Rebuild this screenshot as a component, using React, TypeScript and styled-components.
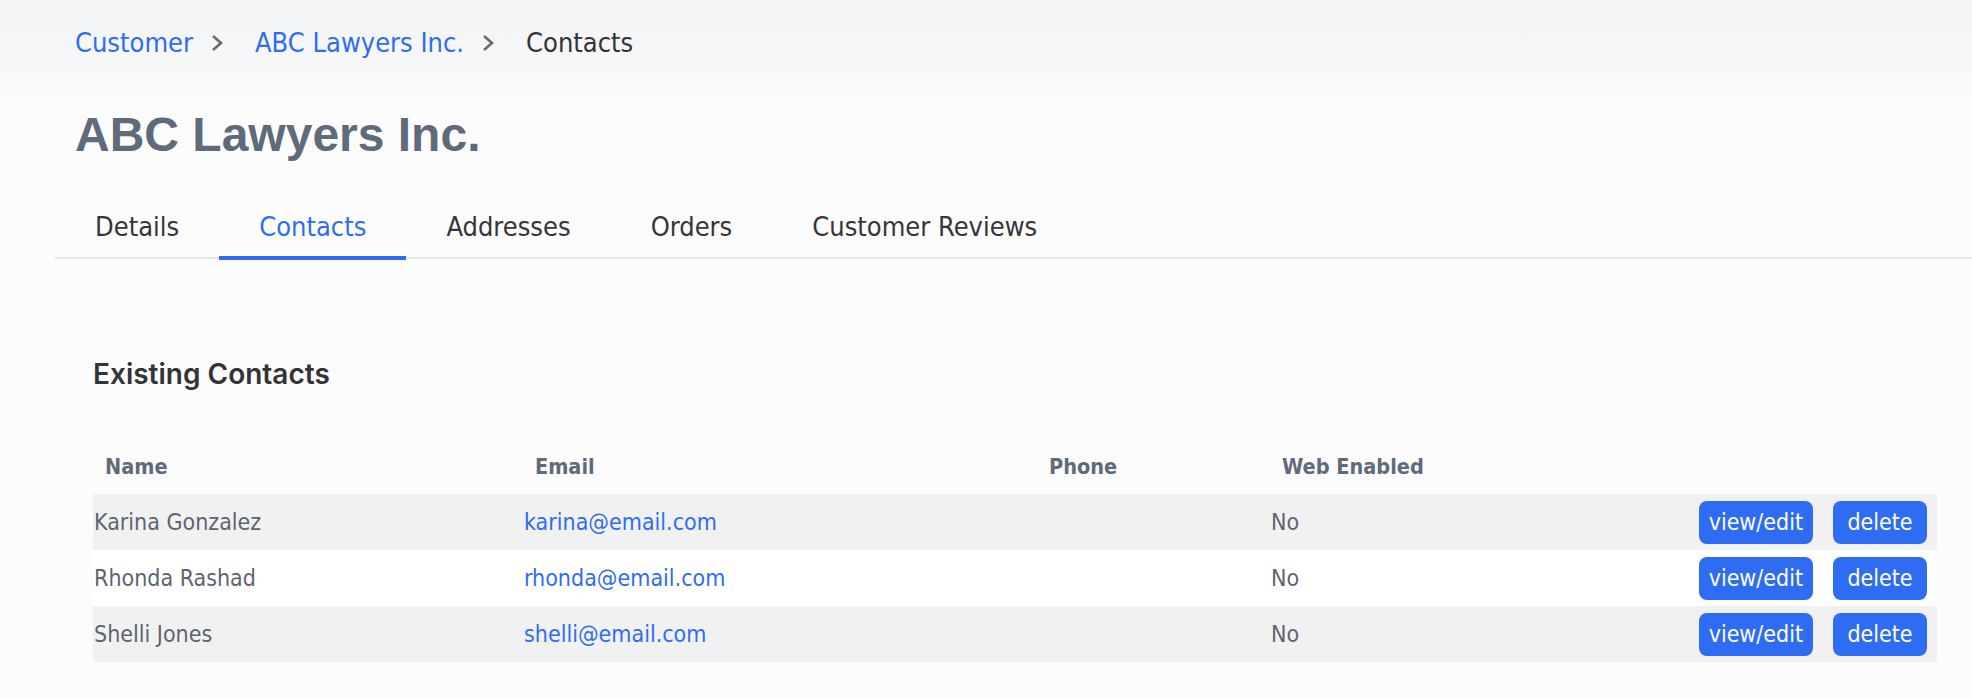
import React from 'react';
import styled, { createGlobalStyle } from 'styled-components';

const BLUE = '#2f6cf4';

const GlobalStyle = createGlobalStyle`
    html, body {
        margin: 0;
        padding: 0;
    }

    body {
        min-height: 698px;
        background: linear-gradient(#f2f3f5 0, #fcfcfc 120px) no-repeat, #fcfcfc;
        font-family: "DejaVu Sans Condensed", "DejaVu Sans", sans-serif;
        font-stretch: condensed;
        color: #333;
    }
`;

const Page = styled.div`
    padding-top: 27px;
`;

const Header = styled.header`
    padding-left: 75px;
`;

const Breadcrumbs = styled.nav`
    display: flex;
    align-items: center;
    height: 32px;
    font-size: 27px;
    line-height: 32px;
`;

const Crumb = styled.a<{ $current?: boolean }>`
    color: ${(p) => (p.$current ? '#333' : BLUE)};
    text-decoration: none;
    cursor: ${(p) => (p.$current ? 'default' : 'pointer')};
`;

const Separator = styled.span`
    display: inline-flex;
    margin: 0 32px 0 18px;
`;

const Title = styled.h1`
    margin: 48px 0 0;
    font-family: "Liberation Sans", Arial, sans-serif;
    font-stretch: normal;
    font-size: 48px;
    line-height: 56px;
    font-weight: 700;
    color: #5f6b7a;
`;

const TabBar = styled.div`
    display: flex;
    margin: 48px 0 0 55px;
    border-bottom: 2px solid #e6e6e6;
`;

const Tab = styled.a<{ $active?: boolean }>`
    padding: 0 40px 13px;
    margin-bottom: -3px;
    font-size: 27px;
    line-height: 32px;
    color: ${(p) => (p.$active ? BLUE : '#36353a')};
    border-bottom: 4px solid ${(p) => (p.$active ? BLUE : 'transparent')};
    cursor: pointer;
`;

const Content = styled.section`
    padding: 0 35px 0 93px;
`;

const SectionTitle = styled.h2`
    margin: 99px 0 0;
    font-family: Inter, "Liberation Sans", sans-serif;
    font-stretch: normal;
    font-size: 28px;
    line-height: 32px;
    font-weight: 600;
    color: #333338;
`;

const Table = styled.div`
    margin-top: 48px;
    display: grid;
    grid-template-columns: 430px 514px 233px 1fr auto;
`;

const HeadCell = styled.div`
    display: flex;
    align-items: center;
    height: 56px;
    padding-left: 12px;
    font-size: 21.5px;
    font-weight: 700;
    color: #5f6b7a;
`;

const Cell = styled.div<{ $striped?: boolean }>`
    display: flex;
    align-items: center;
    height: 56px;
    padding-left: 1px;
    font-size: 23px;
    color: #5d6472;
    background: ${(p) => (p.$striped ? '#f1f1f1' : '#ffffff')};
`;

const EmailLink = styled.a`
    color: ${BLUE};
    text-decoration: none;
`;

const Actions = styled(Cell)`
    gap: 20px;
    padding: 0 10px 0 0;
    justify-content: flex-end;
`;

const Button = styled.button`
    height: 43px;
    min-width: 94px;
    padding: 0 10px;
    border: none;
    border-radius: 8px;
    background: ${BLUE};
    color: #fff;
    font-family: inherit;
    font-stretch: condensed;
    font-size: 23px;
    cursor: pointer;
`;

function Chevron() {
    return (
        <svg width="12" height="18" viewBox="0 0 12 18">
            <polyline points="2,2 10,9 2,16" fill="none" stroke="#6a6a6a" strokeWidth="2.6" />
        </svg>
    );
}

const contacts = [
    { name: 'Karina Gonzalez', email: 'karina@email.com', phone: '', web: 'No' },
    { name: 'Rhonda Rashad', email: 'rhonda@email.com', phone: '', web: 'No' },
    { name: 'Shelli Jones', email: 'shelli@email.com', phone: '', web: 'No' },
];

const tabs = ['Details', 'Contacts', 'Addresses', 'Orders', 'Customer Reviews'];

export default function App() {
    return (
        <Page>
            <GlobalStyle />
            <Header>
                <Breadcrumbs>
                    <Crumb>Customer</Crumb>
                    <Separator>
                        <Chevron />
                    </Separator>
                    <Crumb>ABC Lawyers Inc.</Crumb>
                    <Separator>
                        <Chevron />
                    </Separator>
                    <Crumb $current>Contacts</Crumb>
                </Breadcrumbs>
                <Title>ABC Lawyers Inc.</Title>
            </Header>

            <TabBar>
                {tabs.map((t) => (
                    <Tab key={t} $active={t === 'Contacts'}>
                        {t}
                    </Tab>
                ))}
            </TabBar>

            <Content>
                <SectionTitle>Existing Contacts</SectionTitle>
                <Table>
                    <HeadCell>Name</HeadCell>
                    <HeadCell>Email</HeadCell>
                    <HeadCell>Phone</HeadCell>
                    <HeadCell>Web Enabled</HeadCell>
                    <HeadCell />
                    {contacts.map((c, i) => {
                        const striped = i % 2 === 0;
                        return (
                            <React.Fragment key={c.email}>
                                <Cell $striped={striped}>{c.name}</Cell>
                                <Cell $striped={striped}>
                                    <EmailLink>{c.email}</EmailLink>
                                </Cell>
                                <Cell $striped={striped}>{c.phone}</Cell>
                                <Cell $striped={striped}>{c.web}</Cell>
                                <Actions $striped={striped}>
                                    <Button>view/edit</Button>
                                    <Button>delete</Button>
                                </Actions>
                            </React.Fragment>
                        );
                    })}
                </Table>
            </Content>
        </Page>
    );
}
